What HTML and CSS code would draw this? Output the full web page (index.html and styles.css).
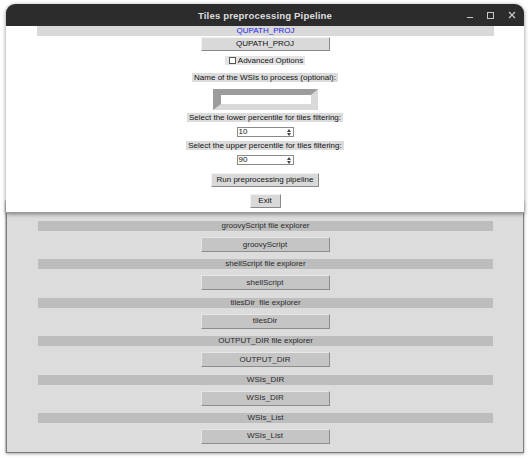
FILE: index.html
```html
<!DOCTYPE html>
<html>
<head>
<meta charset="utf-8">
<link rel="stylesheet" href="styles.css">
</head>
<body>
<div class="desktop">
  <div class="win back">
    <div class="rows">
      <div class="row"><div class="lbl dark">groovyScript file explorer</div><div class="btn dark">groovyScript</div></div>
      <div class="row"><div class="lbl dark">shellScript file explorer</div><div class="btn dark">shellScript</div></div>
      <div class="row"><div class="lbl dark">tilesDir&nbsp; file explorer</div><div class="btn dark">tilesDir</div></div>
      <div class="row"><div class="lbl dark">OUTPUT_DIR file explorer</div><div class="btn dark">OUTPUT_DIR</div></div>
      <div class="row"><div class="lbl dark">WSIs_DIR</div><div class="btn dark">WSIs_DIR</div></div>
      <div class="row"><div class="lbl dark">WSIs_List</div><div class="btn dark">WSIs_List</div></div>
    </div>
  </div>
  <div class="win front">
    <div class="titlebar">
      <span class="title">Tiles preprocessing Pipeline</span>
      <div class="controls">
        <span class="ctl min"></span>
        <span class="ctl max"></span>
        <svg class="ctl close" width="8" height="8" viewBox="0 0 8 8"><path d="M1 1L7 7M7 1L1 7" stroke="#c8c8c8" stroke-width="1.2"/></svg>
      </div>
    </div>
    <div class="content">
      <div class="lbl wide blue">QUPATH_PROJ</div>
      <div class="btn light b-qupath">QUPATH_PROJ</div>
      <div class="check"><span class="box"></span>Advanced Options</div>
      <div class="lbl small l-name">Name of the WSIs to process (optional):</div>
      <div class="entry"><div class="entry-in"></div></div>
      <div class="lbl small l-low">Select the lower percentile for tiles filtering:</div>
      <div class="spin"><span class="val">10</span><span class="arrows"><i class="up"></i><i class="down"></i></span></div>
      <div class="lbl small l-up">Select the upper percentile for tiles filtering:</div>
      <div class="spin s2"><span class="val">90</span><span class="arrows"><i class="up"></i><i class="down"></i></span></div>
      <div class="btn light b-run">Run preprocessing pipeline</div>
      <div class="btn light b-exit">Exit</div>
    </div>
  </div>
</div>
</body>
</html>
```

FILE: styles.css
```css
html, body {
  margin: 0;
  padding: 0;
  background: #ffffff;
}
body {
  width: 530px;
  height: 458px;
  overflow: hidden;
  font-family: "Liberation Sans", Arial, sans-serif;
  font-size: 8px;
  color: #111;
}
.desktop {
  position: relative;
  width: 530px;
  height: 458px;
}
.win {
  position: absolute;
  box-sizing: border-box;
}
.back {
  left: 6px;
  top: 200px;
  width: 518px;
  height: 253px;
  background: #dcdcdc;
  border: 1px solid #7c7c7c;
  border-top: none;
  box-shadow: 0 1px 3px rgba(0,0,0,0.35), -1px 0 1px rgba(0,0,0,0.15);
}
.rows {
  display: flex;
  flex-direction: column;
  gap: 7.4px;
  padding-top: 21px;
}
.row {
  display: flex;
  flex-direction: column;
  align-items: center;
  gap: 6px;
}
.lbl {
  display: flex;
  align-items: center;
  justify-content: center;
  box-sizing: border-box;
  white-space: nowrap;
  line-height: 1;
}
.lbl.dark {
  align-self: stretch;
  margin: 0 30px 0 31px;
  height: 10px;
  background: #bdbdbd;
  color: #2a2a2a;
}
.btn {
  display: flex;
  align-items: center;
  justify-content: center;
  box-sizing: border-box;
  white-space: nowrap;
  line-height: 1;
}
.btn.dark {
  width: 129px;
  height: 15px;
  background: #c5c5c5;
  border: 1px solid;
  border-color: #e6e6e6 #8d8d8d #8d8d8d #e6e6e6;
  color: #2a2a2a;
}
.front {
  left: 6px;
  top: 4px;
  width: 518px;
  height: 209px;
  background: #ffffff;
  border-radius: 9px 9px 0 0;
  box-shadow: 0 1px 4px rgba(0,0,0,0.45);
  border-bottom: 1px solid #9a9a9a;
}
.titlebar {
  position: relative;
  height: 22px;
  background: #2c2c2c;
  border-radius: 9px 9px 0 0;
  display: flex;
  align-items: center;
  justify-content: center;
}
.title {
  font-family: "Liberation Sans", Arial, sans-serif;
  font-weight: bold;
  font-size: 9.6px;
  color: #dedede;
  letter-spacing: 0.15px;
}
.controls {
  position: absolute;
  right: 8px;
  top: 0;
  height: 22px;
  display: flex;
  align-items: center;
  gap: 14px;
}
.ctl {
  display: block;
}
.ctl.min {
  width: 6px;
  height: 1px;
  background: #c8c8c8;
  margin-top: 5px;
}
.ctl.max {
  width: 5px;
  height: 5px;
  border: 1px solid #c8c8c8;
}
.content {
  display: flex;
  flex-direction: column;
  align-items: center;
}
.lbl.wide {
  align-self: stretch;
  margin: 0 30px 0 31px;
  height: 10px;
  background: #d9d9d9;
}
.blue {
  color: #2626e6;
}
.btn.light {
  background: #d9d9d9;
  border: 1px solid;
  border-color: #f2f2f2 #8a8a8a #8a8a8a #f2f2f2;
  color: #111;
}
.b-qupath {
  margin-top: 1px;
  width: 129px;
  height: 14px;
}
.check {
  margin-top: 5px;
  height: 9px;
  padding: 0 2px 0 4px;
  background: #e4e4e4;
  display: flex;
  align-items: center;
  gap: 2px;
  line-height: 1;
}
.box {
  width: 7px;
  height: 7px;
  box-sizing: border-box;
  border: 1px solid #555;
  background: #fff;
}
.lbl.small {
  height: 9px;
  padding: 0 2px;
  background: #dcdcdc;
}
.l-name {
  margin-top: 8px;
}
.entry {
  margin-top: 7px;
  width: 105px;
  height: 21px;
  box-sizing: border-box;
  border-style: solid;
  border-width: 6px 7px 6px 8px;
  border-color: #9c9c9c #d9d9d9 #d9d9d9 #9c9c9c;
  background: #fff;
}
.l-low {
  margin-top: 3px;
}
.spin {
  margin-top: 5px;
  width: 57px;
  height: 10px;
  box-sizing: border-box;
  border: 1px solid #8a8a8a;
  background: #fff;
  display: flex;
  align-items: center;
  justify-content: space-between;
  padding-left: 1px;
  line-height: 1;
}
.l-up {
  margin-top: 4px;
}
.arrows {
  display: flex;
  flex-direction: column;
  gap: 1px;
  margin-right: 2px;
}
.arrows i {
  display: block;
  width: 0;
  height: 0;
  border-left: 2px solid transparent;
  border-right: 2px solid transparent;
}
.arrows .up {
  border-bottom: 3px solid #444;
}
.arrows .down {
  border-top: 3px solid #444;
}
.b-run {
  margin-top: 8px;
  width: 108px;
  height: 14px;
}
.b-exit {
  margin-top: 7px;
  width: 31px;
  height: 14px;
}
```
